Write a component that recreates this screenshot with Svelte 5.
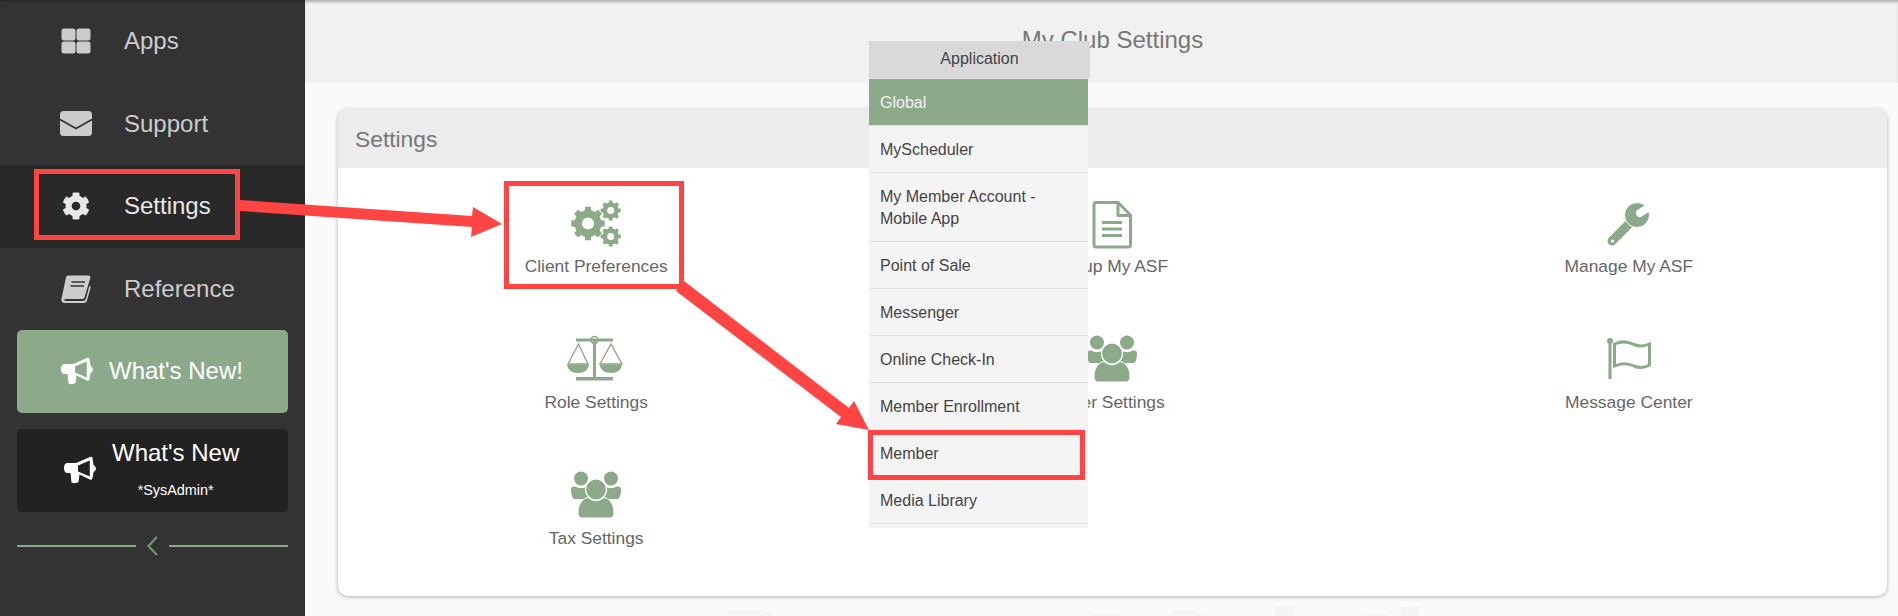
<script>
  const cells = [
    { label: "Client Preferences", icon: "gears" },
    { label: "Setup My ASF", icon: "doc" },
    { label: "Manage My ASF", icon: "wrench" },
    { label: "Role Settings", icon: "scales" },
    { label: "User Settings", icon: "users" },
    { label: "Message Center", icon: "flag" },
    { label: "Tax Settings", icon: "users" },
  ];

  const apps = [
    { label: "Global", active: true },
    { label: "MyScheduler" },
    { label: "My Member Account - Mobile App" },
    { label: "Point of Sale" },
    { label: "Messenger" },
    { label: "Online Check-In" },
    { label: "Member Enrollment" },
    { label: "Member" },
    { label: "Media Library" },
  ];

  // cog outline with a round hole, for the Client Preferences icon
  function gear(cx, cy, r, hole, teeth = 8) {
    const inner = r * 0.8;
    const step = (Math.PI * 2) / teeth;
    const pts = [];
    for (let i = 0; i < teeth; i++) {
      const a = i * step;
      const w = step * 0.22;
      const w2 = step * 0.3;
      pts.push([a - w2, inner], [a - w, r], [a + w, r], [a + w2, inner]);
    }
    const d = pts
      .map(([a, rad], i) => `${i ? "L" : "M"}${(cx + rad * Math.cos(a)).toFixed(2)} ${(cy + rad * Math.sin(a)).toFixed(2)}`)
      .join("");
    return `${d}Z M${cx - hole} ${cy}a${hole} ${hole} 0 1 0 ${hole * 2} 0a${hole} ${hole} 0 1 0 ${-hole * 2} 0Z`;
  }
</script>

<div class="page">
  <aside class="sidebar">
    <nav>
      <div class="nav-item">
        <span class="nav-icon">
          <svg width="30" height="26" viewBox="0 0 30 26" fill="currentColor">
            <rect x="0.5" y="0.5" width="14" height="12" rx="2.5" />
            <rect x="15.5" y="0.5" width="14" height="12" rx="2.5" />
            <rect x="0.5" y="13.5" width="14" height="12" rx="2.5" />
            <rect x="15.5" y="13.5" width="14" height="12" rx="2.5" />
          </svg>
        </span>
        <span>Apps</span>
      </div>
      <div class="nav-item">
        <span class="nav-icon">
          <svg width="32" height="25" viewBox="0 0 32 25">
            <rect width="32" height="25" rx="3.5" fill="currentColor" />
            <path d="M0 8.5L16 17.5L32 8.5" fill="none" stroke="#333" stroke-width="1.7" />
          </svg>
        </span>
        <span>Support</span>
      </div>
      <div class="nav-item current">
        <span class="nav-icon">
          <svg width="28" height="28" viewBox="0 0 512 512" fill="currentColor">
            <path d="M487.4 315.7l-42.6-24.6c4.3-23.2 4.3-47 0-70.2l42.6-24.6c4.9-2.8 7.1-8.6 5.5-14-11.1-35.6-30-67.8-54.7-94.6-3.8-4.1-10-5.1-14.8-2.3L380.8 110c-17.9-15.4-38.5-27.3-60.8-35.1V25.8c0-5.6-3.9-10.5-9.4-11.7-36.7-8.2-74.3-7.8-109.2 0-5.5 1.2-9.4 6.1-9.4 11.7V75c-22.2 7.9-42.8 19.8-60.8 35.1L88.7 85.5c-4.9-2.8-11-1.9-14.8 2.3-24.7 26.7-43.6 58.9-54.7 94.6-1.7 5.4.6 11.2 5.5 14L67.3 221c-4.3 23.2-4.3 47 0 70.2l-42.6 24.6c-4.9 2.8-7.1 8.6-5.5 14 11.1 35.6 30 67.8 54.7 94.6 3.8 4.1 10 5.1 14.8 2.3l42.6-24.6c17.9 15.4 38.5 27.3 60.8 35.1v49.2c0 5.6 3.9 10.5 9.4 11.7 36.7 8.2 74.3 7.8 109.2 0 5.5-1.2 9.4-6.1 9.4-11.7v-49.2c22.2-7.9 42.8-19.8 60.8-35.1l42.6 24.6c4.9 2.8 11 1.9 14.8-2.3 24.7-26.7 43.6-58.9 54.7-94.6 1.5-5.5-.7-11.3-5.6-14.1zM256 336c-44.1 0-80-35.9-80-80s35.9-80 80-80 80 35.9 80 80-35.9 80-80 80z" />
          </svg>
        </span>
        <span>Settings</span>
      </div>
      <div class="nav-item">
        <span class="nav-icon">
          <svg width="30" height="28" viewBox="0 0 30 28">
            <path d="M7 0.5H27Q30 0.5 29.3 3L23.5 22.5Q23 24 21 24H5.5Q3 24 3.2 25Q3.4 26 5.5 26H22Q24 26 25 23.5L28.5 10.5L29.8 12L26 25.5Q25.2 28 22.5 28H4Q0 28 0.4 24L5 2.5Q5.4 0.5 7 0.5Z" fill="currentColor" />
            <path d="M10.5 7H24M9.5 11H23" stroke="#333" stroke-width="1.6" />
          </svg>
        </span>
        <span>Reference</span>
      </div>
    </nav>

    <div class="news news-green">
      <svg class="horn" width="32" height="28" viewBox="0 0 32 28">
        <path fill-rule="evenodd" fill="#fff" d="M3 7H12L26 1Q28 0 28.5 2L29.6 9Q32 10.5 32 12.5T29.6 16L28.5 22Q28 24.5 26 23.5L15.5 18.5L14.5 26Q11 28 7.5 26.5L6.5 17H3Q0 16.5 0 12T3 7ZM14 9.5V15.5L25.8 20.5V4.5Z" />
      </svg>
      <span>What's New!</span>
    </div>

    <div class="news news-dark">
      <svg class="horn" width="32" height="28" viewBox="0 0 32 28">
        <path fill-rule="evenodd" fill="#fff" d="M3 7H12L26 1Q28 0 28.5 2L29.6 9Q32 10.5 32 12.5T29.6 16L28.5 22Q28 24.5 26 23.5L15.5 18.5L14.5 26Q11 28 7.5 26.5L6.5 17H3Q0 16.5 0 12T3 7ZM14 9.5V15.5L25.8 20.5V4.5Z" />
      </svg>
      <div class="news-text">
        <span>What's New</span>
        <small>*SysAdmin*</small>
      </div>
    </div>

    <div class="collapse">
      <span class="rule"></span>
      <svg width="11" height="20" viewBox="0 0 11 20">
        <path d="M10 1L1.500 10L10 19" fill="none" stroke="#6e9070" stroke-width="2.400" />
      </svg>
      <span class="rule"></span>
    </div>
  </aside>

  <main>
    <header class="title">My Club Settings</header>

    <section class="card">
      <h2>Settings</h2>
      <div class="grid">
        {#each cells as cell}
          <div class="cell">
            <svg class="cell-icon" width="60" height="48" viewBox="0 0 60 48">
              {#if cell.icon === "gears"}
                <path fill-rule="evenodd" d={gear(22, 23.5, 17, 6)} />
                <path fill-rule="evenodd" d={gear(44.7, 10.5, 10.2, 3.5)} />
                <path fill-rule="evenodd" d={gear(44.7, 36.5, 10.2, 3.5)} />
              {:else if cell.icon === "doc"}
                <path class="line" d="M12 4.500Q12 2.500 14 2.500H36L48.500 15V45Q48.500 47 46.500 47H14Q12 47 12 45Z" />
                <path class="line" d="M36 3V15.500H48" />
                <path class="line" d="M20 22.500H40M20 29H40M20 35.500H40" />
              {:else if cell.icon === "wrench"}
                <path d="M13 41L31 23" stroke="#8caa8a" stroke-width="9" stroke-linecap="round" />
                <circle cx="38" cy="15" r="12.500" stroke="#fff" stroke-width="1" />
                <path d="M41 13L55 4" stroke="#fff" stroke-width="8" stroke-linecap="round" />
                <circle cx="13.500" cy="41" r="1.500" fill="#fff" />
              {:else if cell.icon === "scales"}
                <rect x="10" y="2.500" width="37" height="3" />
                <rect x="27" y="4" width="3" height="40" />
                <rect x="10" y="41" width="37" height="3.500" />
                <circle cx="28.500" cy="4" r="3.500" class="line thin" fill="#fff" />
                <path class="line thin" d="M12.500 8L2 28H22Z" />
                <path class="line thin" d="M45 8L34 28H56Z" />
                <path d="M1 28.500H23Q22 37 12 37T1 28.500Z" />
                <path d="M33.500 28.500H56Q55 37 45 37T33.500 28.500Z" />
              {:else if cell.icon === "users"}
                <g transform="translate(5 -1)">
                  <circle cx="10" cy="7.500" r="7" />
                  <circle cx="40" cy="7.500" r="7" />
                  <path d="M0 18Q0 15 4 15.500Q10 19 16 15.500L18 28H3Q0 26 0 18Z" />
                  <path d="M50 18Q50 15 46 15.500Q40 19 34 15.500L32 28H47Q50 26 50 18Z" />
                  <circle cx="25" cy="18.500" r="10.500" stroke="#fff" stroke-width="1.200" />
                  <path d="M7 41C7 33 12 27 17 26.500Q25 33 33 26.500C38 27 43 33 43 41Q43 47 39 47H11Q7 47 7 41Z" stroke="#fff" stroke-width="1" />
                </g>
              {:else if cell.icon === "flag"}
                <rect x="9.500" y="3" width="3" height="40" />
                <circle cx="11" cy="5" r="3" />
                <path class="line" d="M15.500 8C24 4 30 6 35 8.500C41 11 46 10 50.500 8V29C45 32 41 32.500 35 30C30 27.500 24 26 15.500 30Z" />
              {/if}
            </svg>
            <span class="cell-label">{cell.label}</span>
          </div>
        {/each}
      </div>
    </section>
  </main>

  <div class="apps-menu">
    <div class="apps-head">Application</div>
    <ul>
      {#each apps as app}
        <li class:active={app.active}>{app.label}</li>
      {/each}
    </ul>
  </div>

  <!-- faint page watermark, only the letter tops show above the fold -->
  <svg class="overlay" width="1898" height="616" viewBox="0 0 1898 616">
    <g fill="#f4f4f4">
      <path d="M726 616L728 610H760Q770 611 773 616Z" />
      <path d="M1089 616L1092 614H1118L1120 616Z" />
      <path d="M1165 616Q1185 605 1208 616Z" />
      <path d="M1274 616L1276 606H1296L1294 616Z" />
      <path d="M1360 616Q1375 610 1390 616Z" />
      <path d="M1400 616L1402 607H1420L1418 616Z" />
    </g>
    <g class="note">
      <rect x="36.500" y="171.500" width="201" height="66" />
      <rect x="506.500" y="183.500" width="175" height="103" />
      <rect x="870.500" y="432.500" width="212" height="45" />
    </g>
    <g fill="#ff4444">
      <path d="M240 200L472 216L473 207L502 224L471 237L472 227L240 211Z" />
      <path d="M676 291L684 281L849 408L854 401L869 430L836 424L841 417Z" />
    </g>
  </svg>
</div>

<style>
  :global(body) {
    margin: 0;
    background: #fafafa;
  }

  .page {
    position: relative;
    display: flex;
    width: 1898px;
    height: 616px;
    overflow: hidden;
    font-family: "Liberation Sans", Arial, sans-serif;
  }

  .sidebar {
    width: 305px;
    flex-shrink: 0;
    background: #333;
    box-shadow: inset 0 3px 3px -2px rgba(0, 0, 0, 0.3);
  }

  .nav-item {
    display: flex;
    align-items: center;
    gap: 28px;
    height: 82.5px;
    padding-left: 56px;
    font-size: 24px;
    color: #ccc;
  }

  .nav-item.current {
    background: #292929;
    color: #e8e8e8;
  }

  .nav-icon {
    display: flex;
    justify-content: center;
    width: 40px;
  }

  .news {
    display: flex;
    align-items: center;
    width: 271px;
    height: 83px;
    margin-left: 17px;
    box-sizing: border-box;
    border-radius: 5px;
    color: #fff;
    font-size: 24px;
  }

  .news-green {
    background: #8caa8a;
    padding-left: 44px;
    gap: 16px;
  }

  .news-green span {
    margin-bottom: 2px;
  }

  .news-dark {
    margin-top: 16px;
    background: #222;
    padding-left: 47px;
    gap: 16px;
  }

  .horn {
    flex-shrink: 0;
    margin-bottom: 1px;
  }

  .news-text {
    display: flex;
    flex-direction: column;
    align-items: center;
    gap: 13px;
    margin-top: -4px;
  }

  .news-text span {
    line-height: 30px;
  }

  .news-text small {
    font-size: 14.4px;
    line-height: 18px;
  }

  .collapse {
    display: flex;
    align-items: center;
    gap: 11px;
    width: 271px;
    margin: 24px 0 0 17px;
  }

  .collapse svg {
    flex-shrink: 0;
  }

  .rule {
    flex: 1;
    height: 2px;
    background: #8caa8a;
  }

  main {
    flex: 1;
    min-width: 0;
    background: #fafafa;
  }

  .title {
    height: 83px;
    box-sizing: border-box;
    padding: 0 0 3px 22px;
    display: flex;
    align-items: center;
    justify-content: center;
    background: #f1f1f1;
    box-shadow: inset 0 3px 3px -1px rgba(0, 0, 0, 0.28);
    font-size: 24px;
    color: #777;
  }

  .card {
    margin: 26px 11px 0 33px;
    background: #fff;
    border-radius: 10px;
    box-shadow: 0 1px 4px rgba(0, 0, 0, 0.3);
    overflow: hidden;
  }

  h2 {
    margin: 0;
    height: 59px;
    box-sizing: border-box;
    padding: 2px 0 0 17px;
    display: flex;
    align-items: center;
    background: #ececec;
    font-size: 22.8px;
    font-weight: normal;
    color: #777;
  }

  .grid {
    display: grid;
    grid-template-columns: repeat(3, 1fr);
    grid-auto-rows: 77px;
    row-gap: 59px;
    padding: 32px 0 47px;
  }

  .cell {
    display: flex;
    flex-direction: column;
    align-items: center;
  }

  .cell-icon {
    fill: #8caa8a;
    overflow: visible;
  }

  .line {
    fill: none;
    stroke: #8caa8a;
    stroke-width: 3;
  }

  .line.thin {
    stroke-width: 1.4;
  }

  .cell-label {
    margin-top: 8px;
    font-size: 17.4px;
    line-height: 20px;
    color: #666;
  }

  .apps-menu {
    position: absolute;
    left: 869px;
    top: 41px;
    width: 221px;
  }

  .apps-head {
    height: 37px;
    line-height: 36px;
    text-align: center;
    font-size: 16px;
    color: #444;
    background: #d9d9d9;
    border-bottom: 1px solid #e6e6e6;
  }

  ul {
    list-style: none;
    margin: 0;
    padding: 0 0 4px;
    width: 219px;
    background: #f4f4f4;
  }

  li {
    padding: 13px 11px 11px;
    line-height: 22px;
    font-size: 16px;
    color: #444;
    border-bottom: 1px solid #e2e2e2;
  }

  li.active {
    background: #8caa8a;
    color: #f2f2f2;
  }

  .overlay {
    position: absolute;
    left: 0;
    top: 0;
    pointer-events: none;
  }

  .note {
    fill: none;
    stroke: #ff4444;
    stroke-width: 5;
  }
</style>
